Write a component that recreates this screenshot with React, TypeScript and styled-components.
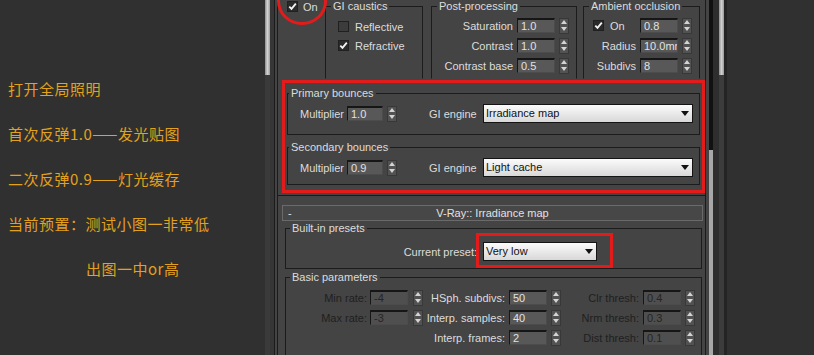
import styled, { createGlobalStyle } from 'styled-components';

const RED = '#e31b1b';

const GlobalStyle = createGlobalStyle`
  html, body {
    margin: 0;
    padding: 0;
    background: #303030;
  }
  body {
    font-family: 'Liberation Sans', Arial, sans-serif;
  }
`;

const Page = styled.div`
  display: flex;
  width: 814px;
  height: 355px;
  overflow: hidden;
  background: #303030;
`;

const Notes = styled.div`
  width: 265px;
  flex-shrink: 0;
  box-sizing: border-box;
  padding: 79px 0 0 8px;
  display: flex;
  flex-direction: column;
  gap: 25px;
  font-family: 'Noto Sans CJK SC', sans-serif;
  font-size: 15px;
  line-height: 20px;
  letter-spacing: 0.5px;
  color: #e4a11b;
`;

const NoteLine = styled.div<{ $indent?: number }>`
  padding-left: ${(p) => p.$indent ?? 0}px;
  white-space: nowrap;
`;

const Rail = styled.div`
  display: flex;
  flex-shrink: 0;
  height: 100%;
`;

const Strip = styled.div<{ $w: number; $bg: string }>`
  width: ${(p) => p.$w}px;
  height: 100%;
  background: ${(p) => p.$bg};
`;

const Panel = styled.div`
  width: 435px;
  flex-shrink: 0;
  box-sizing: border-box;
  border-left: 1px solid #1b1b1b;
  padding-left: 2px;
  background: #444444;
  color: #dcdcdc;
  font-size: 11px;
  line-height: 12px;
  overflow: hidden;
`;

const RolloutFrame = styled.div`
  width: 429px;
  height: 100%;
  box-sizing: border-box;
  border-left: 1px solid #1b1b1b;
  border-right: 1px solid #1b1b1b;
`;

const GIRollout = styled.div`
  padding: 0 0 2px 4px;
  border-bottom: 1px solid #1b1b1b;
`;

const TopRow = styled.div`
  display: flex;
  align-items: flex-start;
  height: 79px;
`;

const OnCol = styled.div`
  position: relative;
  width: 43px;
  flex-shrink: 0;
  box-sizing: border-box;
  padding: 1px 0 0 5px;
  display: flex;
  align-items: center;
  gap: 5px;
  height: 12px;
`;

const Circle = styled.div`
  position: absolute;
  left: -5px;
  top: -22px;
  width: 50px;
  height: 47px;
  box-sizing: border-box;
  border: 3px solid ${RED};
  border-radius: 50%;
`;

const Group = styled.fieldset<{ $w: number; $h?: number; $ml?: number; $mt?: number; $open?: boolean }>`
  margin: ${(p) => p.$mt ?? 0}px 0 0 ${(p) => p.$ml ?? 0}px;
  padding: 0;
  min-width: 0;
  width: ${(p) => p.$w}px;
  ${(p) => (p.$h ? `height: ${p.$h}px;` : '')}
  box-sizing: border-box;
  border: 1px solid #1c1c1c;
  ${(p) => (p.$open ? 'border-bottom-color: transparent;' : '')}
  flex-shrink: 0;
`;

const Legend = styled.legend<{ $lm?: number }>`
  margin-left: ${(p) => p.$lm ?? 5}px;
  padding: 0 2px;
  font-size: 11px;
  line-height: 12px;
  color: #dcdcdc;
`;

const GroupBody = styled.div<{ $pad: string; $gap?: number }>`
  padding: ${(p) => p.$pad};
  display: flex;
  flex-direction: column;
  gap: ${(p) => p.$gap ?? 0}px;
`;

const CheckRow = styled.div`
  display: flex;
  align-items: center;
  gap: 6px;
  height: 11px;
`;

const Box = styled.span<{ $on?: boolean; $ml?: number }>`
  width: 11px;
  height: 11px;
  margin-left: ${(p) => p.$ml ?? 0}px;
  flex-shrink: 0;
  box-sizing: border-box;
  display: inline-flex;
  align-items: center;
  justify-content: center;
  background: ${(p) => (p.$on ? '#2a2a2a' : '#3c3c3c')};
  border: 1px solid #202020;
`;

const ParamRow = styled.div<{ $h?: number }>`
  display: flex;
  align-items: center;
  height: ${(p) => p.$h ?? 15}px;
`;

const Label = styled.span<{ $w: number; $right?: boolean; $pr?: number; $off?: boolean }>`
  width: ${(p) => p.$w}px;
  flex-shrink: 0;
  box-sizing: border-box;
  padding-right: ${(p) => p.$pr ?? 0}px;
  text-align: ${(p) => (p.$right ? 'right' : 'left')};
  white-space: nowrap;
  color: ${(p) => (p.$off ? '#1f1f1f' : '#dcdcdc')};
`;

const SlotLabel = styled.span<{ $w: number }>`
  width: ${(p) => p.$w}px;
  flex-shrink: 0;
  display: flex;
  align-items: center;
  gap: 6px;
`;

const NumInput = styled.div<{ $w?: number; $off?: boolean }>`
  width: ${(p) => p.$w ?? 38}px;
  height: 15px;
  flex-shrink: 0;
  box-sizing: border-box;
  padding-left: 3px;
  background: ${(p) => (p.$off ? '#4f4f4f' : '#585858')};
  border-top: 2px solid #161616;
  border-left: 1px solid #161616;
  border-right: 1px solid #4c4c4c;
  border-bottom: 1px solid #4c4c4c;
  color: ${(p) => (p.$off ? '#252525' : '#e2e2e2')};
  line-height: 12px;
  white-space: nowrap;
  overflow: hidden;
`;

const SpinBox = styled.div<{ $ml?: number }>`
  width: 10px;
  height: 16px;
  margin-left: ${(p) => p.$ml ?? 4}px;
  flex-shrink: 0;
  box-sizing: border-box;
  background: #525252;
  border: 1px solid #383838;
  display: flex;
  flex-direction: column;
  justify-content: space-around;
  align-items: center;
`;

const Spacer = styled.div<{ $w: number }>`
  width: ${(p) => p.$w}px;
  flex-shrink: 0;
`;

const Highlight = styled.div`
  margin-top: 1px;
  width: 423px;
  box-sizing: border-box;
  border: 3px solid ${RED};
  padding: 4px 2px 5px 2px;
  display: flex;
  flex-direction: column;
  gap: 6px;
`;

const Select = styled.div<{ $w: number }>`
  width: ${(p) => p.$w}px;
  height: 19px;
  flex-shrink: 0;
  box-sizing: border-box;
  border: 1px solid #141414;
  background: linear-gradient(#fbfbfb, #d8d8d8);
  color: #111111;
  padding: 0 3px 0 2px;
  display: flex;
  align-items: center;
  justify-content: space-between;
  line-height: 17px;
`;

const SelectWrap = styled.div<{ $ml?: number }>`
  position: relative;
  margin-left: ${(p) => p.$ml ?? 0}px;
`;

const Callout = styled.div`
  position: absolute;
  left: -7px;
  top: -9px;
  width: 137px;
  height: 35px;
  box-sizing: border-box;
  border: 3px solid ${RED};
`;

const IrrRollout = styled.div`
  padding: 9px 0 0 4px;
`;

const RolloutHeader = styled.div`
  width: 421px;
  height: 16px;
  box-sizing: border-box;
  border: 1px solid #6a6a6a;
  background: #474747;
  display: grid;
  grid-template-columns: 1fr auto 1fr;
  align-items: center;
  color: #e2e2e2;
`;

const HeaderMinus = styled.span`
  padding-left: 5px;
`;

const SubGroups = styled.div`
  padding-left: 3px;
`;

const Spinner = ({ ml }: { ml?: number }) => (
  <SpinBox $ml={ml}>
    <svg width="6" height="4" viewBox="0 0 6 4">
      <path d="M3 0L6 4H0Z" fill="#d4d4d4" />
    </svg>
    <svg width="6" height="4" viewBox="0 0 6 4">
      <path d="M0 0H6L3 4Z" fill="#d4d4d4" />
    </svg>
  </SpinBox>
);

const Check = ({ on, ml }: { on?: boolean; ml?: number }) => (
  <Box $on={on} $ml={ml}>
    {on && (
      <svg width="9" height="9" viewBox="0 0 9 9">
        <path d="M1.3 4.6L3.5 6.9L7.8 1.6" stroke="#f2f2f2" strokeWidth="1.8" fill="none" />
      </svg>
    )}
  </Box>
);

const Dropdown = ({ w, text }: { w: number; text: string }) => (
  <Select $w={w}>
    <span>{text}</span>
    <svg width="8" height="5" viewBox="0 0 8 5">
      <path d="M0 0H8L4 5Z" fill="#111" />
    </svg>
  </Select>
);

type Param = { label: string; value: string; off?: boolean };

const basicRows: (Param | null)[][] = [
  [
    { label: 'Min rate:', value: '-4', off: true },
    { label: 'HSph. subdivs:', value: '50' },
    { label: 'Clr thresh:', value: '0.4', off: true },
  ],
  [
    { label: 'Max rate:', value: '-3', off: true },
    { label: 'Interp. samples:', value: '40' },
    { label: 'Nrm thresh:', value: '0.3', off: true },
  ],
  [null, { label: 'Interp. frames:', value: '2' }, { label: 'Dist thresh:', value: '0.1', off: true }],
];

const basicCols = [
  { w: 84, pr: 3, ml: 5 },
  { w: 86, pr: 4, ml: 4 },
  { w: 82, pr: 4, ml: 4 },
];

const bounces = [
  { title: 'Primary bounces', mult: '1.0', engine: 'Irradiance map', pb: 11 },
  { title: 'Secondary bounces', mult: '0.9', engine: 'Light cache', pb: 7 },
];

export default function App() {
  return (
    <Page>
      <GlobalStyle />
      <Notes>
        <NoteLine>打开全局照明</NoteLine>
        <NoteLine>首次反弹1.0——发光贴图</NoteLine>
        <NoteLine>二次反弹0.9——灯光缓存</NoteLine>
        <NoteLine>当前预置：测试小图一非常低</NoteLine>
        <NoteLine $indent={78}>出图一中or高</NoteLine>
      </Notes>

      <Rail>
        <Strip
          $w={5}
          $bg="linear-gradient(to right, #8e8e8e, #d2d2d2, #9c9c9c) top / 100% 75px no-repeat, #3a3a3a"
        />
        <Strip $w={4} $bg="#363636" />
      </Rail>

      <Panel>
        <RolloutFrame>
          <GIRollout>
            <TopRow>
              <OnCol>
                <Check on />
                <span>On</span>
                <Circle />
              </OnCol>

              <Group $w={98} $h={79} $open>
                <Legend>GI caustics</Legend>
                <GroupBody $pad="9px 0 0 12px" $gap={8}>
                  <CheckRow>
                    <Check />
                    <span>Reflective</span>
                  </CheckRow>
                  <CheckRow>
                    <Check on />
                    <span>Refractive</span>
                  </CheckRow>
                </GroupBody>
              </Group>

              <Group $w={146} $h={79} $ml={8} $open>
                <Legend>Post-processing</Legend>
                <GroupBody $pad="6px 0 0 0" $gap={5}>
                  {[
                    ['Saturation', '1.0'],
                    ['Contrast', '1.0'],
                    ['Contrast base', '0.5'],
                  ].map(([l, v]) => (
                    <ParamRow key={l}>
                      <Label $w={85} $pr={4} $right>
                        {l}
                      </Label>
                      <NumInput>{v}</NumInput>
                      <Spinner />
                    </ParamRow>
                  ))}
                </GroupBody>
              </Group>

              <Group $w={117} $h={79} $ml={6} $open>
                <Legend>Ambient occlusion</Legend>
                <GroupBody $pad="6px 0 0 0" $gap={5}>
                  <ParamRow>
                    <SlotLabel $w={56}>
                      <Check on ml={9} />
                      <span>On</span>
                    </SlotLabel>
                    <NumInput>0.8</NumInput>
                    <Spinner />
                  </ParamRow>
                  <ParamRow>
                    <Label $w={56} $pr={4} $right>
                      Radius
                    </Label>
                    <NumInput>10.0mm</NumInput>
                    <Spinner />
                  </ParamRow>
                  <ParamRow>
                    <Label $w={56} $pr={4} $right>
                      Subdivs
                    </Label>
                    <NumInput>8</NumInput>
                    <Spinner />
                  </ParamRow>
                </GroupBody>
              </Group>
            </TopRow>

            <Highlight>
              {bounces.map((b) => (
                <Group key={b.title} $w={413}>
                  <Legend $lm={1}>{b.title}</Legend>
                  <GroupBody $pad={`5px 0 ${b.pb}px 12px`}>
                    <ParamRow $h={19}>
                      <Label $w={47}>Multiplier</Label>
                      <NumInput $w={36}>{b.mult}</NumInput>
                      <Spinner />
                      <Spacer $w={32} />
                      <Label $w={54}>GI engine</Label>
                      <Dropdown w={210} text={b.engine} />
                    </ParamRow>
                  </GroupBody>
                </Group>
              ))}
            </Highlight>
          </GIRollout>

          <IrrRollout>
            <RolloutHeader>
              <HeaderMinus>-</HeaderMinus>
              <span>V-Ray:: Irradiance map</span>
              <span />
            </RolloutHeader>

            <SubGroups>
              <Group $w={417} $mt={1}>
                <Legend $lm={4}>Built-in presets</Legend>
                <GroupBody $pad="8px 0 7px 0">
                  <ParamRow $h={19}>
                    <Label $w={191} $right>
                      Current preset:
                    </Label>
                    <SelectWrap $ml={6}>
                      <Dropdown w={114} text="Very low" />
                      <Callout />
                    </SelectWrap>
                  </ParamRow>
                </GroupBody>
              </Group>

              <Group $w={417} $h={110} $mt={2}>
                <Legend $lm={4}>Basic parameters</Legend>
                <GroupBody $pad="7px 0 0 0" $gap={5}>
                  {basicRows.map((row, ri) => (
                    <ParamRow key={ri}>
                      {row.map((p, ci) => {
                        const c = basicCols[ci];
                        if (!p) return <Spacer key={ci} $w={c.w + 38 + c.ml + 10} />;
                        return (
                          <ParamRow key={ci}>
                            <Label $w={c.w} $pr={c.pr} $right $off={p.off}>
                              {p.label}
                            </Label>
                            <NumInput $off={p.off}>{p.value}</NumInput>
                            <Spinner ml={c.ml} />
                          </ParamRow>
                        );
                      })}
                    </ParamRow>
                  ))}
                </GroupBody>
              </Group>
            </SubGroups>
          </IrrRollout>
        </RolloutFrame>
      </Panel>

      <Rail>
        <Strip $w={4} $bg="linear-gradient(to bottom, #111111 0 150px, #a8a8a8 150px)" />
        <Strip $w={6} $bg="#2e2e2e" />
        <Strip
          $w={5}
          $bg="linear-gradient(to right, #8e8e8e, #cfcfcf, #9a9a9a) top / 100% 75px no-repeat, #3c3c3c"
        />
        <Strip $w={3} $bg="#242424" />
      </Rail>
    </Page>
  );
}
